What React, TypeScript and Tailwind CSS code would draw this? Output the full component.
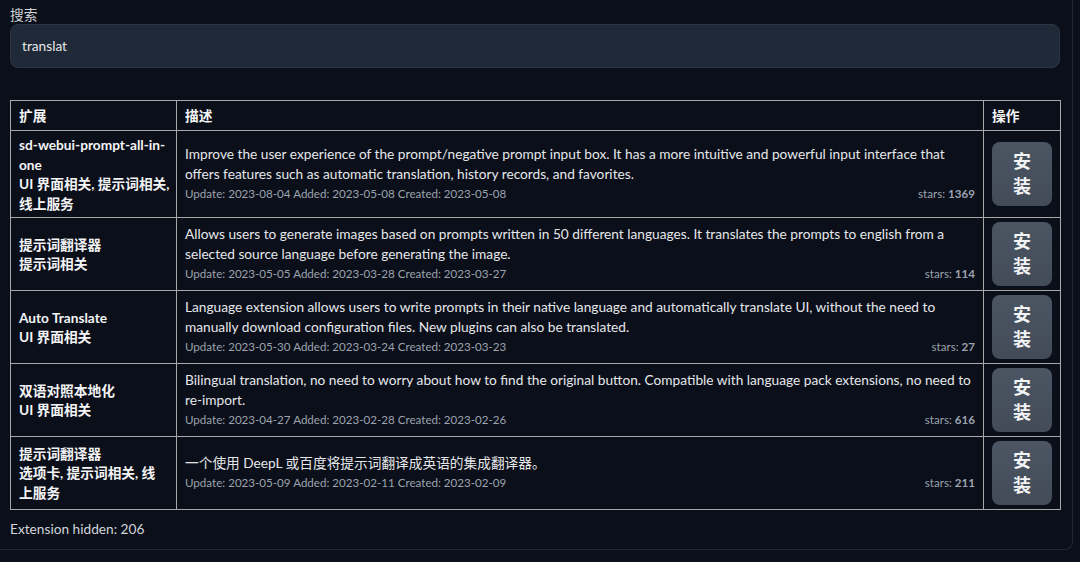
import React from 'react'

type Ext = {
  name: string[]
  desc: string
  update: string
  added: string
  created: string
  stars: number
}

// name lines are kept as they break in the narrow first column
const exts: Ext[] = [
  {
    name: ['sd-webui-prompt-all-in-', 'one', 'UI 界面相关, 提示词相关,', '线上服务'],
    desc: 'Improve the user experience of the prompt/negative prompt input box. It has a more intuitive and powerful input interface that offers features such as automatic translation, history records, and favorites.',
    update: '2023-08-04',
    added: '2023-05-08',
    created: '2023-05-08',
    stars: 1369,
  },
  {
    name: ['提示词翻译器', '提示词相关'],
    desc: 'Allows users to generate images based on prompts written in 50 different languages. It translates the prompts to english from a selected source language before generating the image.',
    update: '2023-05-05',
    added: '2023-03-28',
    created: '2023-03-27',
    stars: 114,
  },
  {
    name: ['Auto Translate', 'UI 界面相关'],
    desc: 'Language extension allows users to write prompts in their native language and automatically translate UI, without the need to manually download configuration files. New plugins can also be translated.',
    update: '2023-05-30',
    added: '2023-03-24',
    created: '2023-03-23',
    stars: 27,
  },
  {
    name: ['双语对照本地化', 'UI 界面相关'],
    desc: 'Bilingual translation, no need to worry about how to find the original button. Compatible with language pack extensions, no need to re-import.',
    update: '2023-04-27',
    added: '2023-02-28',
    created: '2023-02-26',
    stars: 616,
  },
  {
    name: ['提示词翻译器', '选项卡, 提示词相关, 线', '上服务'],
    desc: '一个使用 DeepL 或百度将提示词翻译成英语的集成翻译器。',
    update: '2023-05-09',
    added: '2023-02-11',
    created: '2023-02-09',
    stars: 211,
  },
]

// latin from Lato (close to the Source Sans widths), CJK falls through to Noto
const font = { fontFamily: 'Lato, "Noto Sans CJK SC", sans-serif' }

export default function App() {
  return (
    <div className="min-h-[562px] w-[1080px] bg-[#0b0f19] overflow-hidden" style={font}>
      <div className="w-[1073px] h-[550px] border-r border-b border-[#1f2937] rounded-br-lg px-[10px] pt-[5px]">
        <label className="block text-[13.7px] leading-[20px] text-[#d1d5db]">搜索</label>
        <div className="mt-[-1px] h-[44px] w-[1050px] rounded-lg border border-[#2c3544] bg-[#1f2937] px-[11px] flex items-center text-[13.7px] text-[#e5e7eb]">
          translat
        </div>

        <table className="mt-[32px] w-[1050px] border-collapse table-fixed text-[#e5e7eb]">
          <colgroup>
            <col className="w-[166px]" />
            <col className="w-[807px]" />
            <col className="w-[77px]" />
          </colgroup>
          <thead>
            <tr className="h-[30px]">
              {['扩展', '描述', '操作'].map((h) => (
                <th key={h} className="h-[30px] border border-[#a8a8a8] px-2 py-0 text-left text-[13.7px] leading-[18px] font-bold text-[#f3f4f6]">
                  {h}
                </th>
              ))}
            </tr>
          </thead>
          <tbody>
            {exts.map((e, i) => (
              <tr key={i}>
                <td className="border border-[#a8a8a8] px-2 py-1 align-middle text-[13.7px] leading-[19.5px] font-bold text-[#f3f4f6] whitespace-nowrap">
                  {e.name.map((n, j) => (
                    <div key={j}>{n}</div>
                  ))}
                </td>
                <td className="border border-[#a8a8a8] px-2 py-1 align-middle">
                  <p className="text-[13.7px] leading-[20px] text-[#e5e7eb]">{e.desc}</p>
                  <div className="flex justify-between text-[11.6px] leading-[20px] text-[#9ca3af]">
                    <span>
                      Update: {e.update} Added: {e.added} Created: {e.created}
                    </span>
                    <span>
                      stars: <b className="font-bold">{e.stars}</b>
                    </span>
                  </div>
                </td>
                <td className="border border-[#a8a8a8] px-2 py-1 align-middle">
                  <button className="flex h-[64px] w-[60px] flex-col items-center justify-center rounded-lg bg-gradient-to-b from-[#4b5563] to-[#434b58] text-[18px] font-bold leading-[25px] text-[#f3f4f6]">
                    <span>安</span>
                    <span>装</span>
                  </button>
                </td>
              </tr>
            ))}
          </tbody>
        </table>

        <div className="mt-[9px] text-[13.7px] leading-[20px] text-[#d1d5db]">Extension hidden: 206</div>
      </div>
    </div>
  )
}
